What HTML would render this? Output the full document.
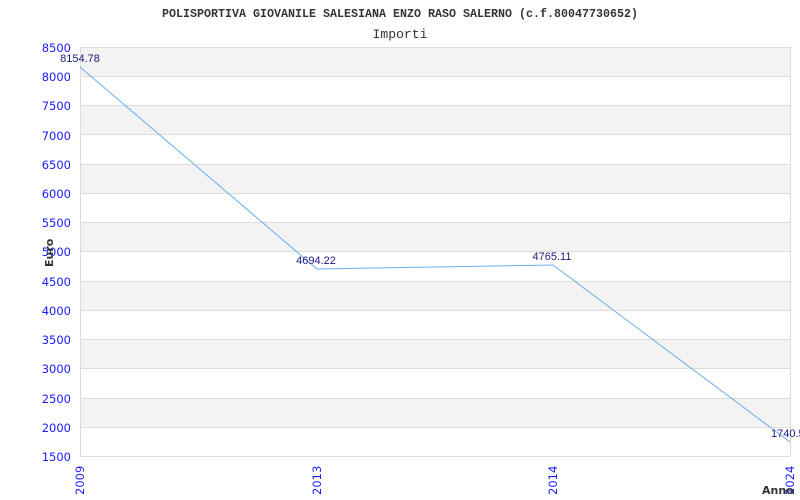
<!DOCTYPE html>
<html><head><meta charset="utf-8"><style>html,body{margin:0;padding:0;background:#fff;width:800px;height:500px;overflow:hidden}</style></head><body>
<svg width="800" height="500" xmlns="http://www.w3.org/2000/svg">
<g fill="#f3f3f3">
<rect x="80" y="47" width="710" height="29.2"/>
<rect x="80" y="105.4" width="710" height="29.2"/>
<rect x="80" y="163.9" width="710" height="29.2"/>
<rect x="80" y="222.3" width="710" height="29.2"/>
<rect x="80" y="280.7" width="710" height="29.2"/>
<rect x="80" y="339.1" width="710" height="29.2"/>
<rect x="80" y="397.6" width="710" height="29.2"/>
</g>
<g stroke="#dcdcdc" stroke-width="1">
<line x1="80" x2="790" y1="47.5" y2="47.5"/><line x1="80" x2="790" y1="76.5" y2="76.5"/><line x1="80" x2="790" y1="105.5" y2="105.5"/><line x1="80" x2="790" y1="134.5" y2="134.5"/><line x1="80" x2="790" y1="164.5" y2="164.5"/><line x1="80" x2="790" y1="193.5" y2="193.5"/><line x1="80" x2="790" y1="222.5" y2="222.5"/><line x1="80" x2="790" y1="251.5" y2="251.5"/><line x1="80" x2="790" y1="281.5" y2="281.5"/><line x1="80" x2="790" y1="310.5" y2="310.5"/><line x1="80" x2="790" y1="339.5" y2="339.5"/><line x1="80" x2="790" y1="368.5" y2="368.5"/><line x1="80" x2="790" y1="398.5" y2="398.5"/><line x1="80" x2="790" y1="427.5" y2="427.5"/><line x1="80" x2="790" y1="456.5" y2="456.5"/>
<line x1="80.5" x2="80.5" y1="47" y2="456"/><line x1="790.5" x2="790.5" y1="47" y2="456"/>
</g>
<polyline points="80,67 317,269 553,265 790,442" fill="none" stroke="#6aaef0" stroke-width="1"/>
<text x="400" y="17" text-anchor="middle" font-family="Liberation Mono, monospace" font-weight="bold" font-size="12" textLength="476" lengthAdjust="spacingAndGlyphs" fill="#333">POLISPORTIVA GIOVANILE SALESIANA ENZO RASO SALERNO (c.f.80047730652)</text>
<text x="400" y="38" text-anchor="middle" font-family="Liberation Mono, monospace" font-size="13" textLength="55" lengthAdjust="spacingAndGlyphs" fill="#333">Importi</text>
<g font-family="DejaVu Sans, sans-serif" font-size="11.5" fill="#1a1aff" text-anchor="end">
<text x="71" y="52">8500</text><text x="71" y="81">8000</text><text x="71" y="110">7500</text><text x="71" y="140">7000</text><text x="71" y="169">6500</text><text x="71" y="198">6000</text><text x="71" y="227">5500</text><text x="71" y="256">5000</text><text x="71" y="286">4500</text><text x="71" y="315">4000</text><text x="71" y="344">3500</text><text x="71" y="373">3000</text><text x="71" y="403">2500</text><text x="71" y="432">2000</text><text x="71" y="461">1500</text>
</g>
<g font-family="DejaVu Sans, sans-serif" font-size="11.5" fill="#1a1aff">
<text transform="translate(84,495) rotate(-90)">2009</text>
<text transform="translate(321,495) rotate(-90)">2013</text>
<text transform="translate(557,495) rotate(-90)">2014</text>
<text transform="translate(794,495) rotate(-90)">2024</text>
</g>
<g font-family="Liberation Sans, sans-serif" font-size="11" fill="#1a1a80">
<text x="80" y="62" text-anchor="middle">8154.78</text>
<text x="316" y="264" text-anchor="middle">4694.22</text>
<text x="552" y="260" text-anchor="middle">4765.11</text>
<text x="771" y="437">1740.5</text>
</g>
<text transform="translate(53,267) rotate(-90)" font-family="DejaVu Sans, sans-serif" font-weight="bold" font-size="11" fill="#333">Euro</text>
<text x="762" y="494" font-family="DejaVu Sans, sans-serif" font-weight="bold" font-size="11" fill="#333">Anno</text>
</svg>
</body></html>
